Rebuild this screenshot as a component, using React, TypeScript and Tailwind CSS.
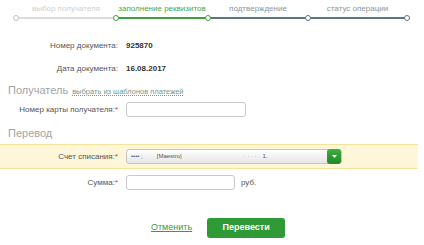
import React from "react";

const Dot = ({ color, className }: { color: string; className: string }) => (
  <span
    className={`absolute top-[-2px] h-[6px] w-[6px] rounded-full border bg-white ${color} ${className}`}
  />
);

export default function App() {
  return (
    <div
      className="h-[245px] w-[424px] overflow-hidden bg-white text-[#333]"
      style={{ fontFamily: '"Liberation Sans", Arial, sans-serif' }}
    >
      {/* Stepper */}
      <div className="flex pl-[16px] pt-[4px]">
        <div className="flex w-[100px] flex-col">
          <div className="text-center text-[8px] leading-[10px] text-[#cfcfcf]">выбор получателя</div>
          <div className="relative mt-[3px] h-[2px] bg-[#dcdcdc]">
            <Dot color="border-[#c0c0c0]" className="left-[-3px]" />
          </div>
        </div>
        <div className="flex w-[92px] flex-col">
          <div className="text-center text-[8px] leading-[10px] text-[#4aa64a]">заполнение реквизитов</div>
          <div className="relative mt-[3px] h-[2px] bg-[#3f9f3f]">
            <Dot color="border-[#3f9f3f]" className="left-[-3px]" />
          </div>
        </div>
        <div className="flex w-[100px] flex-col">
          <div className="text-center text-[8px] leading-[10px] text-[#8a959d]">подтверждение</div>
          <div className="relative mt-[3px] h-[2px] bg-[#5f7482]">
            <Dot color="border-[#3f9f3f]" className="left-[-3px]" />
          </div>
        </div>
        <div className="flex w-[99px] flex-col">
          <div className="text-center text-[8px] leading-[10px] text-[#8a959d]">статус операции</div>
          <div className="relative mt-[3px] h-[2px] bg-[#5f7482]">
            <Dot color="border-[#5f7482]" className="left-[-3px]" />
            <Dot color="border-[#5f7482]" className="right-[-3px]" />
          </div>
        </div>
      </div>

      {/* Doc info */}
      <div className="mt-[22px] flex items-center text-[8px] leading-[10px]">
        <div className="w-[118px] text-right text-[#555]">Номер документа:</div>
        <div className="ml-[8px] font-bold text-[#333]">925870</div>
      </div>
      <div className="mt-[13px] flex items-center text-[8px] leading-[10px]">
        <div className="w-[118px] text-right text-[#555]">Дата документа:</div>
        <div className="ml-[8px] font-bold text-[#333]">16.08.2017</div>
      </div>

      {/* Получатель */}
      <div className="mt-[9px] flex items-baseline pl-[8px]">
        <span className="text-[11px] leading-[14px] text-[#a3a3a3]">Получатель</span>
        <span className="ml-[4px] text-[7.5px] leading-[10px] text-[#6f9a8c] underline decoration-dotted">
          выбрать из шаблонов платежей
        </span>
      </div>

      <div className="mt-[5px] flex items-center text-[8px]">
        <div className="w-[118px] text-right text-[#555]">
          Номер карты получателя:<span className="text-[#e03030]">*</span>
        </div>
        <div className="ml-[8px] h-[15px] w-[120px] rounded-[3px] border border-[#c9c9c9] bg-white" />
      </div>

      {/* Перевод */}
      <div className="mt-[9px] pl-[8px] text-[11px] leading-[14px] text-[#a3a3a3]">Перевод</div>

      <div className="mr-[6px] mt-[4px] flex h-[25px] items-center border-y border-[#f3e39b] bg-[#fdf6d8] text-[8px]">
        <div className="w-[118px] text-right text-[#555]">
          Счет списания:<span className="text-[#e03030]">*</span>
        </div>
        <div className="ml-[8px] flex h-[15px] w-[216px] items-center rounded-[3px] border border-[#c4c4c4] bg-gradient-to-b from-white to-[#e6e6e6] text-[6px] text-[#555]">
          <span className="ml-[4px]">•••• ;</span>
          <span className="ml-[14px]">[Maestro]</span>
          <span className="ml-[62px] text-[#999]">· · · · ·</span>
          <span className="ml-[2px]">1.</span>
          <span className="ml-auto flex h-[15px] w-[14px] items-center justify-center rounded-[3px] bg-gradient-to-b from-[#3dae3d] to-[#23882a]">
            <svg width="5" height="3" viewBox="0 0 5 3">
              <path d="M0 0 L5 0 L2.5 3 Z" fill="white" />
            </svg>
          </span>
        </div>
      </div>

      <div className="mt-[6px] flex items-center text-[8px]">
        <div className="w-[118px] text-right text-[#555]">
          Сумма:<span className="text-[#e03030]">*</span>
        </div>
        <div className="ml-[8px] h-[15px] w-[109px] rounded-[3px] border border-[#c9c9c9] bg-white" />
        <span className="ml-[6px] text-[#555]">руб.</span>
      </div>

      {/* Buttons */}
      <div className="mt-[28px] flex items-center">
        <span className="ml-[151px] text-[9px] text-[#3d9a3d] underline">Отменить</span>
        <button className="ml-[15px] h-[20px] w-[78px] rounded-[3px] bg-[#2f9a36] text-[9px] font-bold text-white">
          Перевести
        </button>
      </div>
    </div>
  );
}
